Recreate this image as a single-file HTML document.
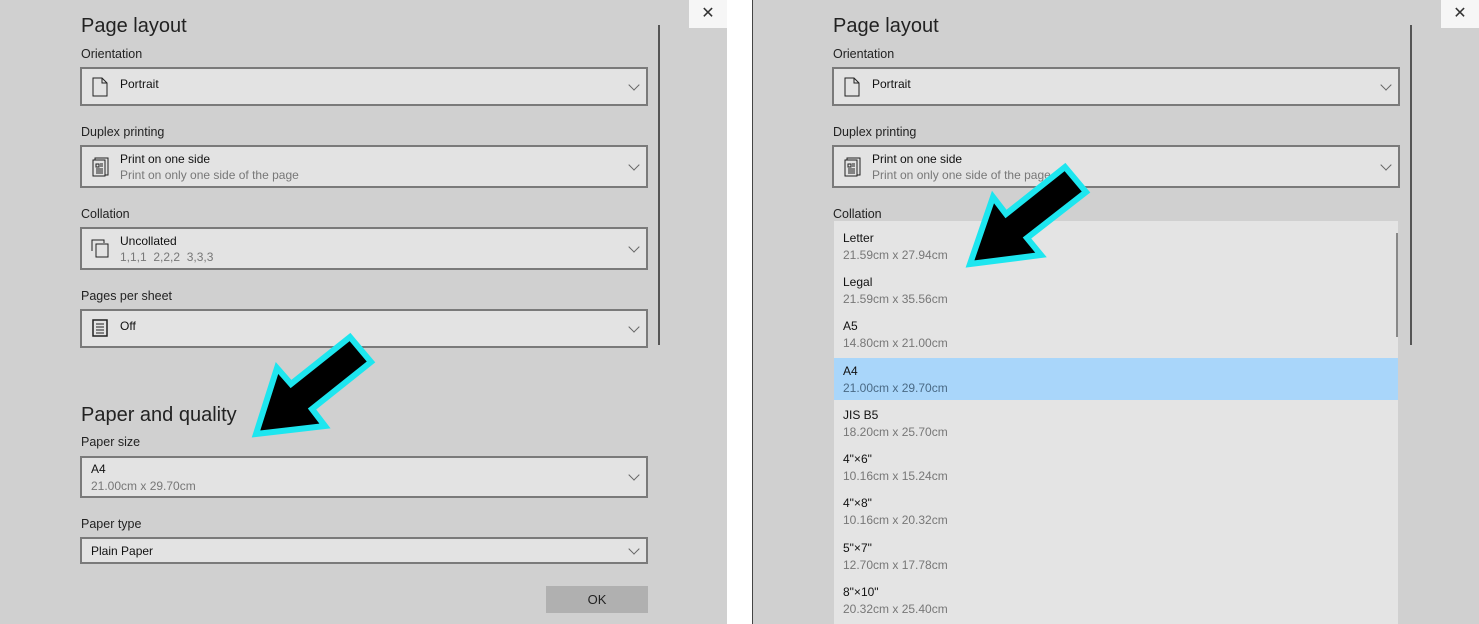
<!DOCTYPE html>
<html><head><meta charset="utf-8"><style>
*{margin:0;padding:0;box-sizing:border-box}
body{width:1479px;height:624px;position:relative;overflow:hidden;background:#fff;font-family:"Liberation Sans",sans-serif;color:#1a1a1a}
.p{position:absolute;top:0;height:624px;width:727px;background:#d0d0d0}
.a{position:absolute}
.h{font-size:20px;color:#222}
.l{font-size:12.5px;color:#222}
.box{position:absolute;left:80px;width:568px;border:2px solid #7a7a7a;background:#e3e3e3}
.t1{position:absolute;font-size:12px;color:#111}
.t2{position:absolute;font-size:12px;color:#777}
.chev{position:absolute;right:8px;width:8px;height:8px;border-right:1px solid #666;border-bottom:1px solid #666;transform:rotate(45deg)}
.x{position:absolute;top:0;width:38px;height:28px;background:#f6f6f6;font-size:16px;text-align:center;line-height:28px;color:#333}
.sb{position:absolute;top:25px;width:2px;height:320px;background:#555}
.it{position:absolute;left:0;width:564px;height:44px}
.it .t1{left:9px;top:9px}.it .t2{left:9px;top:26px}
</style></head><body>
<div class="p" style="left:0"></div>
<div class="p" style="left:752px;border-left:1px solid #444"></div>
<div class="x" style="left:689px">✕</div>
<div class="x" style="left:1441px">✕</div>
<div class="sb" style="left:658px"></div>
<div class="sb" style="left:1410px"></div>

<div class="a" style="left:0;top:0;width:727px;height:624px">
<div class="a h" style="left:81px;top:15px">Page layout</div>
<div class="a l" style="left:81px;top:47px">Orientation</div>
<div class="box" style="top:67px;height:39px"><svg class="a" style="left:10px;top:8px" width="16" height="20"><path d="M1 1h9l5 5v13H1z M10 1v5h5" fill="none" stroke="#222"/></svg><div class="t1" style="left:38px;top:8px">Portrait</div><div class="chev" style="top:12px"></div></div>
<div class="a l" style="left:81px;top:125px">Duplex printing</div>
<div class="box" style="top:145px;height:43px"><svg class="a" style="left:10px;top:10px" width="18" height="20"><rect x="3" y="1" width="13" height="17" fill="none" stroke="#222"/><rect x="1" y="3" width="12" height="16" fill="#e3e3e3" stroke="#222"/><path d="M4 7h3v3H4zM8 7h3M8 9h3M4 12h7M4 14h7M4 16h7" stroke="#222" fill="none"/></svg><div class="t1" style="left:38px;top:5px">Print on one side</div><div class="t2" style="left:38px;top:21px">Print on only one side of the page</div><div class="chev" style="top:14px"></div></div>
<div class="a l" style="left:81px;top:207px">Collation</div>
<div class="box" style="top:227px;height:43px"><svg class="a" style="left:9px;top:10px" width="20" height="20"><path d="M1 12V1h12v3" fill="none" stroke="#222"/><rect x="5" y="5" width="12" height="13" fill="none" stroke="#222"/></svg><div class="t1" style="left:38px;top:5px">Uncollated</div><div class="t2" style="left:38px;top:21px">1,1,1 &nbsp;2,2,2 &nbsp;3,3,3</div><div class="chev" style="top:14px"></div></div>
<div class="a l" style="left:81px;top:289px">Pages per sheet</div>
<div class="box" style="top:309px;height:39px"><svg class="a" style="left:10px;top:8px" width="16" height="18"><rect x="1" y="1" width="14" height="16" fill="none" stroke="#222" stroke-width="1.5"/><path d="M4 5h8M4 8h8M4 11h8M4 14h8" stroke="#222"/></svg><div class="t1" style="left:38px;top:8px">Off</div><div class="chev" style="top:12px"></div></div>
<div class="a h" style="left:81px;top:404px">Paper and quality</div>
<div class="a l" style="left:81px;top:435px">Paper size</div>
<div class="box" style="top:456px;height:42px"><div class="t1" style="left:9px;top:4px">A4</div><div class="t2" style="left:9px;top:21px">21.00cm x 29.70cm</div><div class="chev" style="top:13px"></div></div>
<div class="a l" style="left:81px;top:517px">Paper type</div>
<div class="box" style="top:537px;height:27px"><div class="t1" style="left:9px;top:5px">Plain Paper</div><div class="chev" style="top:6px"></div></div>
<div class="a" style="left:546px;top:586px;width:102px;height:27px;background:#b0b0b0;font-size:13px;text-align:center;line-height:27px;color:#222">OK</div>
</div>

<div class="a" style="left:752px;top:0;width:727px;height:624px">
<div class="a h" style="left:81px;top:15px">Page layout</div>
<div class="a l" style="left:81px;top:47px">Orientation</div>
<div class="box" style="top:67px;height:39px"><svg class="a" style="left:10px;top:8px" width="16" height="20"><path d="M1 1h9l5 5v13H1z M10 1v5h5" fill="none" stroke="#222"/></svg><div class="t1" style="left:38px;top:8px">Portrait</div><div class="chev" style="top:12px"></div></div>
<div class="a l" style="left:81px;top:125px">Duplex printing</div>
<div class="box" style="top:145px;height:43px"><svg class="a" style="left:10px;top:10px" width="18" height="20"><rect x="3" y="1" width="13" height="17" fill="none" stroke="#222"/><rect x="1" y="3" width="12" height="16" fill="#e3e3e3" stroke="#222"/><path d="M4 7h3v3H4zM8 7h3M8 9h3M4 12h7M4 14h7M4 16h7" stroke="#222" fill="none"/></svg><div class="t1" style="left:38px;top:5px">Print on one side</div><div class="t2" style="left:38px;top:21px">Print on only one side of the page</div><div class="chev" style="top:14px"></div></div>
<div class="a l" style="left:81px;top:207px">Collation</div>
<div class="a" style="left:82px;top:221px;width:564px;height:403px;background:#e4e4e4">
<div class="it" style="top:1px"><div class="t1">Letter</div><div class="t2">21.59cm x 27.94cm</div></div>
<div class="it" style="top:45px"><div class="t1">Legal</div><div class="t2">21.59cm x 35.56cm</div></div>
<div class="it" style="top:89px"><div class="t1">A5</div><div class="t2">14.80cm x 21.00cm</div></div>
<div class="a" style="left:0;top:137px;width:564px;height:42px;background:#a9d6fa"></div>
<div class="it" style="top:134px"><div class="t1">A4</div><div class="t2" style="color:#4a6a85">21.00cm x 29.70cm</div></div>
<div class="it" style="top:178px"><div class="t1">JIS B5</div><div class="t2">18.20cm x 25.70cm</div></div>
<div class="it" style="top:222px"><div class="t1">4"×6"</div><div class="t2">10.16cm x 15.24cm</div></div>
<div class="it" style="top:266px"><div class="t1">4"×8"</div><div class="t2">10.16cm x 20.32cm</div></div>
<div class="it" style="top:311px"><div class="t1">5"×7"</div><div class="t2">12.70cm x 17.78cm</div></div>
<div class="it" style="top:355px"><div class="t1">8"×10"</div><div class="t2">20.32cm x 25.40cm</div></div>
<div class="a" style="left:562px;top:12px;width:2px;height:104px;background:#888"></div>
</div>
</div>

<svg class="a" style="left:0;top:0" width="1479" height="624">
<polygon points="256,434 277,368 291,384 350,337 371,362 312,409 325,426" fill="#000" stroke="#1de6ef" stroke-width="6" stroke-linejoin="miter"/>
<polygon points="970,264 993,197 1006,214 1065,167 1086,192 1027,238 1041,255" fill="#000" stroke="#1de6ef" stroke-width="6" stroke-linejoin="miter"/>
</svg>
</body></html>
